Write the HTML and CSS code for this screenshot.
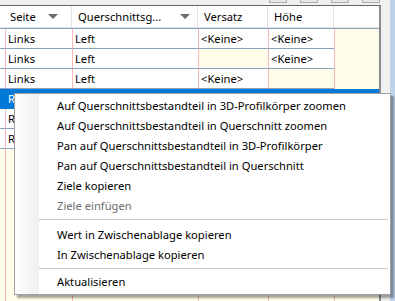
FILE: index.html
```html
<!DOCTYPE html>
<html>
    <head>
        <meta charset="utf-8">
        <title>Querschnitt Tabelle</title>
        <link rel="stylesheet" href="styles.css">
    </head>
    <body>
        <div id="window">
        <div id="main">
            <div class="toolbar">
                <span class="tbtn"></span>
                <span class="tbtn"></span>
                <span class="tbtn"></span>
                <span class="tbtn"></span>
            </div>
            <div class="grid">
                <div class="head">
                    <div class="hcell first">Seite<span class="arrow"></span></div>
                    <div class="hcell second">Querschnittsg...<span class="arrow"></span></div>
                    <div class="hcell">Versatz</div>
                    <div class="hcell">Höhe</div>
                    <div class="hcell last"></div>
                </div>
                <div class="rows">
                    <div class="row">
                        <div class="rh"></div>
                        <div class="cell">Links</div>
                        <div class="cell">Left</div>
                        <div class="cell">&lt;Keine&gt;</div>
                        <div class="cell">&lt;Keine&gt;</div>
                        <div class="cell empty end"></div>
                    </div>
                    <div class="row">
                        <div class="rh"></div>
                        <div class="cell">Links</div>
                        <div class="cell">Left</div>
                        <div class="cell empty"></div>
                        <div class="cell">&lt;Keine&gt;</div>
                        <div class="cell empty end"></div>
                    </div>
                    <div class="row">
                        <div class="rh"></div>
                        <div class="cell">Links</div>
                        <div class="cell">Left</div>
                        <div class="cell">&lt;Keine&gt;</div>
                        <div class="cell empty"></div>
                        <div class="cell empty end"></div>
                    </div>
                    <div class="row sel">
                        <div class="rh"></div>
                        <div class="cell">R</div>
                        <div class="cell"></div>
                        <div class="cell"></div>
                        <div class="cell"></div>
                        <div class="cell end"></div>
                    </div>
                    <div class="row">
                        <div class="rh"></div>
                        <div class="cell">R</div>
                        <div class="cell"></div>
                        <div class="cell"></div>
                        <div class="cell"></div>
                        <div class="cell empty end"></div>
                    </div>
                    <div class="row">
                        <div class="rh"></div>
                        <div class="cell">R</div>
                        <div class="cell"></div>
                        <div class="cell"></div>
                        <div class="cell"></div>
                        <div class="cell empty end"></div>
                    </div>
                    <div class="row filler">
                        <div class="rh"></div>
                        <div class="cell"></div>
                        <div class="cell"></div>
                        <div class="cell"></div>
                        <div class="cell"></div>
                        <div class="cell end"></div>
                    </div>
                </div>
            </div>
        </div>
        <div class="gap"></div>
        <div class="edge"></div>
        </div>

        <ul id="menu">
            <li>Auf Querschnittsbestandteil in 3D-Profilkörper zoomen</li>
            <li>Auf Querschnittsbestandteil in Querschnitt zoomen</li>
            <li>Pan auf Querschnittsbestandteil in 3D-Profilkörper</li>
            <li>Pan auf Querschnittsbestandteil in Querschnitt</li>
            <li>Ziele kopieren</li>
            <li class="off">Ziele einfügen</li>
            <li class="sep first"></li>
            <li>Wert in Zwischenablage kopieren</li>
            <li>In Zwischenablage kopieren</li>
            <li class="sep"></li>
            <li>Aktualisieren</li>
        </ul>
    </body>
</html>
```

FILE: styles.css
```css
html, body {
    height: 100%;
}
body {
    margin: 0;
    background-color: #f0f0f0;
    font-family: "Noto Sans", "Open Sans", sans-serif;
    font-size: 11.2px;
    color: black;
    overflow: hidden;
}

#window {
    display: flex;
    height: 100%;
}

#main {
    width: 381px;
    display: flex;
    flex-direction: column;
}

.gap {
    width: 9px;
}

.edge {
    flex: 1;
    background-color: #bed2ea;
}

.toolbar {
    height: 5px;
    display: flex;
    gap: 13px;
    padding-left: 269px;
}

.tbtn {
    width: 16px;
    height: 2px;
    background-color: #e6e6e6;
    border: 1px solid #adadad;
    border-top: none;
}

.grid {
    flex: 1;
    border-top: 1px solid #646464;
    border-right: 2px solid #8c8c8c;
    background-color: white;
    display: flex;
    flex-direction: column;
}

.head {
    height: 21px;
    display: grid;
    grid-template-columns: 72px 126px 70px 66px 1fr;
    border-bottom: 1px solid #e3e3e3;
}

.hcell {
    display: flex;
    align-items: center;
    padding-left: 6px;
    border-right: 1px solid #e3e3e3;
    white-space: nowrap;
}
.hcell.first {
    padding-left: 10px;
    padding-right: 13px;
}
.hcell.second {
    padding-right: 7px;
}
.hcell.last {
    border-right: none;
}

.arrow {
    margin-left: auto;
    width: 0;
    height: 0;
    border-left: 5px solid transparent;
    border-right: 5px solid transparent;
    border-top: 5px solid #6b6b6b;
}

.rows {
    flex: 1;
    display: flex;
    flex-direction: column;
    border-top: 1px solid #8aa2bc;
}

.row {
    height: 20px;
    display: grid;
    grid-template-columns: 5px 67px 126px 70px 66px 1fr;
}

.rh {
    border-bottom: 1px solid #8aa2bc;
}

.cell {
    border-left: 1px solid #f4b6b6;
    border-bottom: 1px solid #8aa2bc;
    padding-left: 2px;
    line-height: 19px;
    white-space: nowrap;
    overflow: hidden;
}
.cell.empty {
    background-color: #fffde9;
}
.cell.end {
    border-bottom: none;
}

.row.sel {
    background-color: #0078d7;
    color: white;
}
.row.sel .rh,
.row.sel .cell {
    border-color: #0078d7;
}

.row.filler {
    flex: 1;
    height: auto;
    background-color: #fffde9;
}
.row.filler .rh,
.row.filler .cell {
    border-bottom: none;
}

#menu {
    position: absolute;
    left: 14px;
    top: 93px;
    width: 375px;
    margin: 0;
    padding: 2px 0;
    list-style: none;
    border: 1px solid #a0a0a0;
    background: linear-gradient(to right, #fdfdfd 0, #f0f0f0 24px, white 24px);
    box-shadow: 3px 3px 2px rgba(0, 0, 0, 0.35);
}

#menu li {
    height: 20px;
    line-height: 20px;
    padding-left: 42px;
    white-space: nowrap;
}

#menu li.off {
    color: #6d6d6d;
}

#menu li.sep {
    height: 7px;
    margin-left: 24px;
    margin-right: 2px;
    padding: 0;
    background: linear-gradient(#c6c6c6, #c6c6c6) no-repeat 0 3px / 100% 1px;
}
#menu li.sep.first {
    height: 9px;
}
```
